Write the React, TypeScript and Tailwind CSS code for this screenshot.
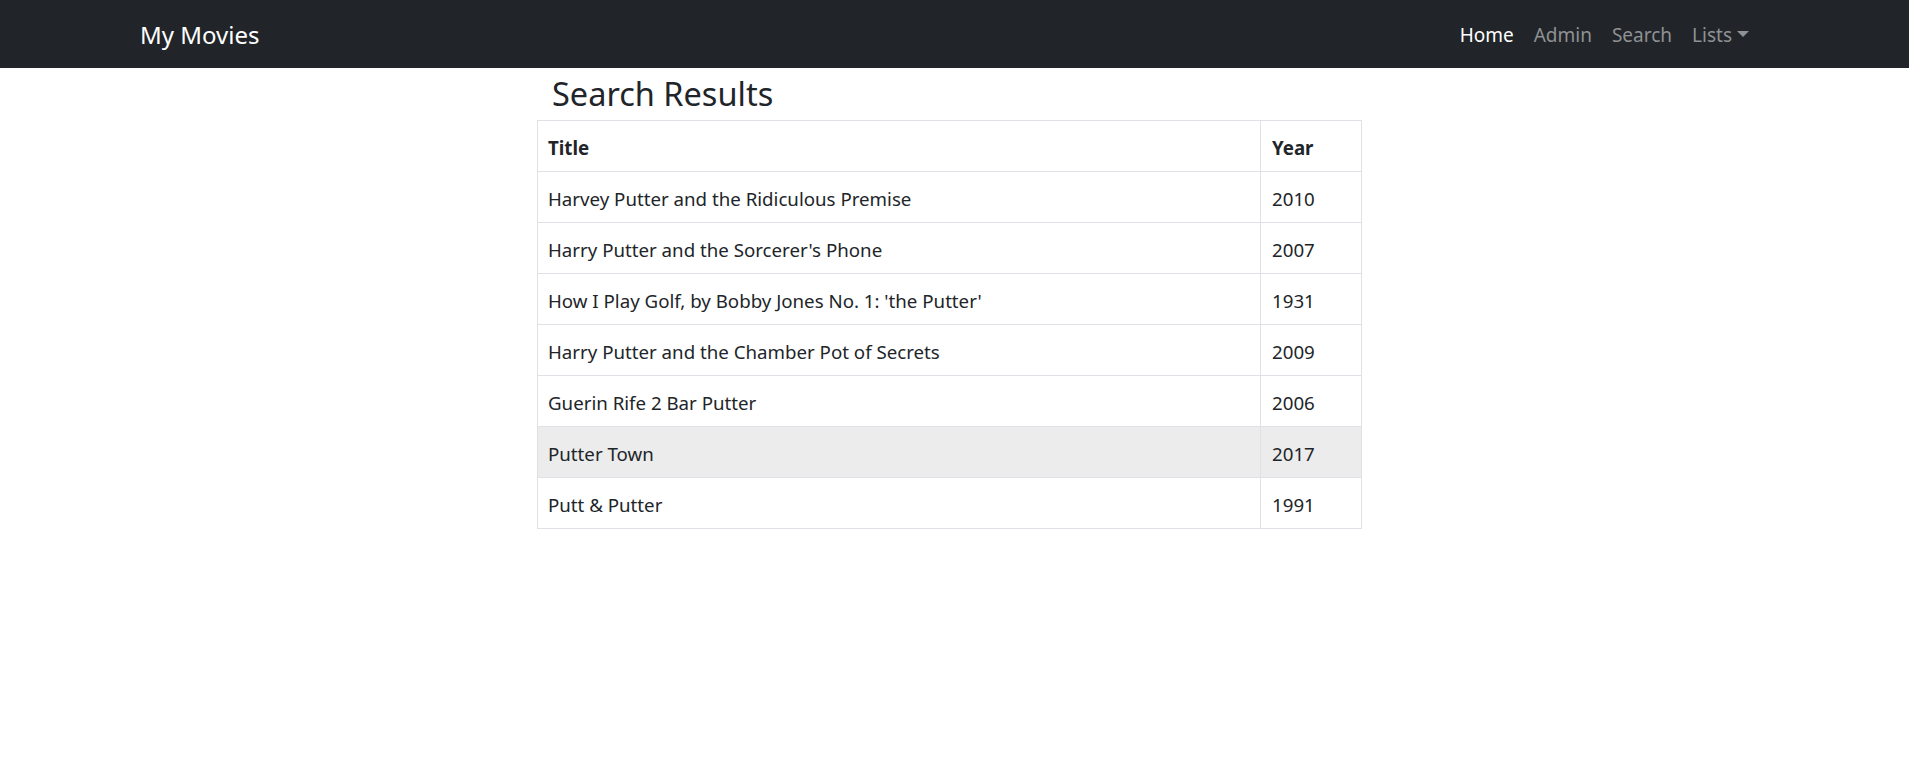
import * as React from 'react';

type Movie = {
  title: string;
  year: number;
};

const movies: Movie[] = [
  { title: 'Harvey Putter and the Ridiculous Premise', year: 2010 },
  { title: "Harry Putter and the Sorcerer's Phone", year: 2007 },
  { title: "How I Play Golf, by Bobby Jones No. 1: 'the Putter'", year: 1931 },
  { title: 'Harry Putter and the Chamber Pot of Secrets', year: 2009 },
  { title: 'Guerin Rife 2 Bar Putter', year: 2006 },
  { title: 'Putter Town', year: 2017 },
  { title: 'Putt & Putter', year: 1991 },
];

const Navbar = () => (
  <nav className="flex h-[68px] items-center bg-[#212529] pl-[140px] pr-[151px] pt-[2px]">
    <a className="text-[24px] leading-none text-white">My Movies</a>
    <ul className="ml-auto flex items-center text-[19px] leading-none">
      <li className="px-[10px] text-white">Home</li>
      <li className="px-[10px] text-[#8f9194]">Admin</li>
      <li className="px-[10px] text-[#8f9194]">Search</li>
      <li className="flex items-center pl-[10px] pr-[9px] text-[#8f9194]">
        Lists
        <span className="ml-[5px] mt-[-3px] h-0 w-0 border-x-[6px] border-t-[6px] border-x-transparent border-t-[#8f9194]" />
      </li>
    </ul>
  </nav>
);

export default function App() {
  const [hovered, setHovered] = React.useState(5);

  return (
    <div className="min-h-screen bg-white font-['Noto_Sans',sans-serif] text-[#212529]">
      <Navbar />
      <main className="ml-[537px] w-[825px]">
        <h2 className="flex h-[52px] items-center pl-[15px] text-[32.5px] leading-none">Search Results</h2>
        <table className="w-full border-collapse border border-[#dee2e6] text-[18.7px]">
          <thead>
            <tr className="h-[51px] border-b border-[#dee2e6]">
              <th className="border-r border-[#dee2e6] pl-[10px] pt-[4px] text-left font-bold">Title</th>
              <th className="w-[101px] pl-[11px] pt-[4px] text-left font-bold">Year</th>
            </tr>
          </thead>
          <tbody>
            {movies.map((m, i) => (
              <tr
                key={m.title}
                onMouseEnter={() => setHovered(i)}
                className={`h-[51px] border-b border-[#dee2e6] ${hovered === i ? 'bg-[#ececec]' : ''}`}
              >
                <td className="border-r border-[#dee2e6] pl-[10px] pt-[4px]">{m.title}</td>
                <td className="pl-[11px] pt-[4px]">{m.year}</td>
              </tr>
            ))}
          </tbody>
        </table>
      </main>
    </div>
  );
}
